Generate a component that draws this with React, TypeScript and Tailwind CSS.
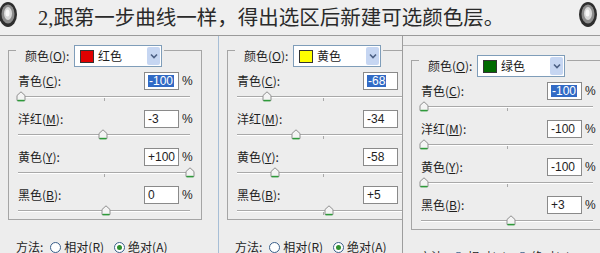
import React from "react";

const PANELS = [
  { name: "红色", swatch: "#e00000", values: [-100, -3, 100, 0], texts: ["-100", "-3", "+100", "0"], percent: true },
  { name: "黄色", swatch: "#ffff00", values: [-68, -34, -58, 5], texts: ["-68", "-34", "-58", "+5"], percent: false },
  { name: "绿色", swatch: "#006a00", values: [-100, -100, -100, 3], texts: ["-100", "-100", "-100", "+3"], percent: true },
];

const ROWS = [
  { label: "青色", key: "C" },
  { label: "洋红", key: "M" },
  { label: "黄色", key: "Y" },
  { label: "黑色", key: "B" },
];

const UI_FONT = "font-['Noto_Sans_CJK_SC',sans-serif]";

function Grommet() {
  return (
    <svg width="20" height="27" viewBox="0 0 20 27">
      <ellipse cx="10" cy="13.5" rx="9" ry="12.5" fill="#2e2e2e" />
      <ellipse cx="10" cy="13" rx="6.5" ry="9.5" fill="#8c8c8c" />
      <ellipse cx="10" cy="12.5" rx="4" ry="6.5" fill="#d8d8d8" />
      <ellipse cx="9.5" cy="12" rx="2" ry="3.5" fill="#f7f7f7" />
    </svg>
  );
}

function Thumb() {
  return (
    <svg width="10" height="11" viewBox="0 0 10 11">
      <path d="M1 4.5 L5 0.8 L9 4.5 V9.5 H1 Z" fill="#f4f4f4" stroke="#8f8f8f" />
      <path d="M1.5 9.6 H8.5" stroke="#2e9a3a" strokeWidth="1.6" />
    </svg>
  );
}

function Key({ text, k }: { text: string; k: string }) {
  return (
    <span>
      {text}(<span className="underline">{k}</span>):
    </span>
  );
}

function Slider({ value }: { value: number }) {
  const left = 3 + ((value + 100) / 200) * 169 - 5;
  return (
    <div className="relative ml-[9px] h-[20px] w-[172px]">
      <div className="absolute left-0 right-0 top-[6px] h-[2px] border-t border-b border-t-[#a9a9a9] border-b-white" />
      <div className="absolute left-[86px] top-[8px] h-[3px] w-px bg-[#a9a9a9]" />
      <div className="absolute top-[1px]" style={{ left }}>
        <Thumb />
      </div>
    </div>
  );
}

function Radio({ checked }: { checked?: boolean }) {
  return (
    <span className="flex h-[11px] w-[11px] items-center justify-center rounded-full border border-[#3a5f8a] bg-white">
      {checked && <span className="h-[5px] w-[5px] rounded-full bg-[#2f8f2f]" />}
    </span>
  );
}

function Panel({ panel }: { panel: (typeof PANELS)[number] }) {
  return (
    <div>
      <div className="relative ml-[8px] mt-[14px] h-[170px] w-[194px] border border-[#a5a5a5]">
        <div className="absolute left-[7px] top-[-6px] flex items-center bg-[#ededed] pl-[9px] pr-[2px]">
          <span className="w-[49px]">
            <Key text="颜色" k="O" />
          </span>
          <div className="flex h-[22px] w-[88px] items-center border border-[#7f9db9] bg-white pl-[5px] pr-[1px]">
            <span className="h-[13px] w-[14px] border border-[#333]" style={{ background: panel.swatch }} />
            <span className="ml-[4px] flex-1">{panel.name}</span>
            <span className="flex h-[18px] w-[13px] items-center justify-center rounded-[2px] bg-[#c6d6f2]">
              <svg width="8" height="6" viewBox="0 0 8 6">
                <path d="M1 1.5 L4 4.5 L7 1.5" fill="none" stroke="#4d6185" strokeWidth="1.6" />
              </svg>
            </span>
          </div>
        </div>
        <div className="pt-[21px]">
          {ROWS.map((row, i) => (
            <div key={row.key}>
              <div className="flex h-[18px] items-center">
                <span className="w-[135px] pl-[9px]">
                  <Key text={row.label} k={row.key} />
                </span>
                <span className="flex h-[18px] w-[35px] items-center border border-[#8a8a8a] bg-white pl-[3px] font-['Liberation_Sans',sans-serif] text-[12px]">
                  <span className={i === 0 ? "bg-[#316ac5] px-px text-white" : ""}>{panel.texts[i]}</span>
                </span>
                {panel.percent && (
                  <span className="ml-[3px] font-['Liberation_Sans',sans-serif] text-[12px]">%</span>
                )}
              </div>
              <Slider value={panel.values[i]} />
            </div>
          ))}
        </div>
      </div>
      <div className="ml-[16px] mt-[17px] flex h-[20px] items-center">
        <span>方法:</span>
        <span className="ml-[7px]">
          <Radio />
        </span>
        <span className="ml-[3px]">
          相对(<span className="underline">R</span>)
        </span>
        <span className="ml-[10px]">
          <Radio checked />
        </span>
        <span className="ml-[3px]">
          绝对(<span className="underline">A</span>)
        </span>
      </div>
    </div>
  );
}

export default function App() {
  return (
    <div className={`h-[253px] w-[600px] overflow-hidden bg-[#ededed] text-[12px] leading-none text-[#1e1e1e] ${UI_FONT}`}>
      <div className="flex h-[36px] items-start justify-between border-b border-[#9a9a9a] bg-[#efefef]">
        <div className="flex items-start">
          <div className="ml-[-2px] mt-[1px]">
            <Grommet />
          </div>
          <h1 className="ml-[20px] mt-[8px] font-['Liberation_Serif','Noto_Sans_CJK_SC',serif] text-[20.5px] font-normal text-[#2a2a2a]">
            2,跟第一步曲线一样，得出选区后新建可选颜色层。
          </h1>
        </div>
        <div className="mr-[2px] mt-[1px]">
          <Grommet />
        </div>
      </div>
      <div className="flex h-[217px]">
        <div className="w-[219px] overflow-hidden border-r border-[#a7bed6]">
          <Panel panel={PANELS[0]} />
        </div>
        <div className="w-[184px] overflow-hidden border-r border-[#9d9d9d]">
          <Panel panel={PANELS[1]} />
        </div>
        <div className="mt-[9px] flex-1 overflow-hidden border-t border-[#b5b5b5]">
          <Panel panel={PANELS[2]} />
        </div>
      </div>
    </div>
  );
}
